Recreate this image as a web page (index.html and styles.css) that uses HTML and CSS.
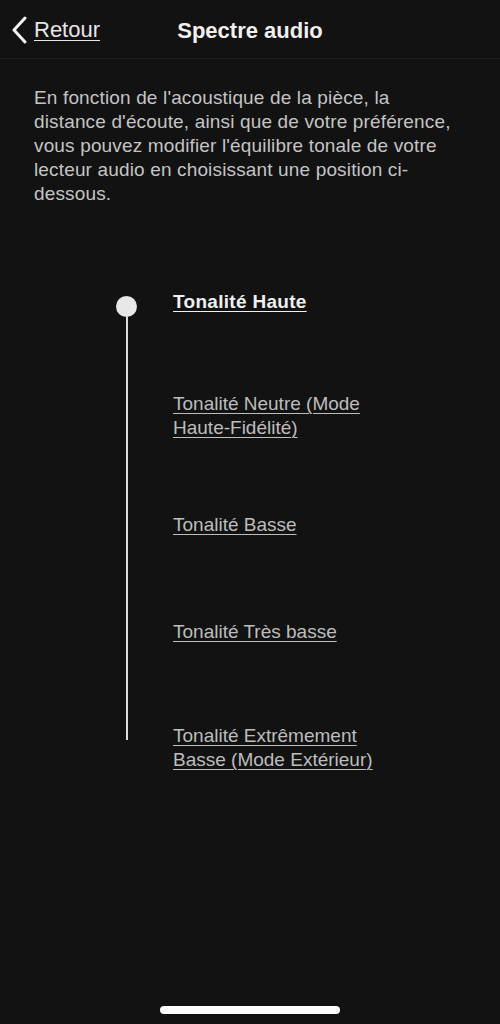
FILE: index.html
```html
<!DOCTYPE html>
<html lang="fr">
<head>
<meta charset="utf-8">
<title>Spectre audio</title>
<link rel="stylesheet" href="styles.css">
</head>
<body>
<div class="screen">
  <header class="nav">
    <a class="back" href="#">
      <svg class="chev" width="18" height="28" viewBox="0 0 18 28"><path d="M15 2 L4 14 L15 26" fill="none" stroke="#f2f2f2" stroke-width="3" stroke-linecap="round" stroke-linejoin="round"/></svg>
      <span class="back-label">Retour</span>
    </a>
    <h1 class="title">Spectre audio</h1>
  </header>
  <p class="intro">En fonction de l'acoustique de la pièce, la distance d'écoute, ainsi que de votre préférence, vous pouvez modifier l'équilibre tonale de votre lecteur audio en choisissant une position ci-dessous.</p>
  <div class="track">
    <div class="rail">
      <span class="dot"></span>
      <span class="line"></span>
    </div>
    <ul class="options">
      <li><a class="opt active" href="#">Tonalité Haute</a></li>
      <li><a class="opt" href="#">Tonalité Neutre (Mode<br>Haute-Fidélité)</a></li>
      <li class="opt-3"><a class="opt" href="#">Tonalité Basse</a></li>
      <li class="opt-4"><a class="opt" href="#">Tonalité Très basse</a></li>
      <li class="opt-5"><a class="opt" href="#">Tonalité Extrêmement<br>Basse (Mode Extérieur)</a></li>
    </ul>
  </div>
  <div class="home-indicator"></div>
</div>
</body>
</html>
```
FILE: styles.css
```css
html, body {
  margin: 0;
  padding: 0;
  background: #121212;
}
body {
  font-family: "Liberation Sans", Arial, sans-serif;
  color: #c8c8c8;
}
.screen {
  position: relative;
  width: 500px;
  height: 1024px;
  overflow: hidden;
  background: #121212;
}
.nav {
  position: relative;
  height: 55px;
  padding-top: 3px;
  border-bottom: 1px solid #1e1e1e;
  display: flex;
  align-items: center;
  justify-content: center;
}
.back {
  position: absolute;
  left: 10px;
  top: 16px;
  display: flex;
  align-items: center;
  gap: 6px;
  color: #e6e6e6;
  text-decoration: none;
}
.chev {
  display: block;
}
.back-label {
  font-size: 22px;
  text-decoration: underline;
  text-underline-offset: 3px;
  text-decoration-thickness: 1px;
}
.title {
  margin: 0;
  font-size: 22px;
  font-weight: bold;
  color: #f0f0f0;
}
.intro {
  margin: 27px 34px 0 34px;
  font-size: 19px;
  letter-spacing: 0.15px;
  line-height: 24px;
  color: #c4c4c4;
}
.track {
  display: flex;
  margin-top: 84px;
  padding-left: 116px;
}
.rail {
  width: 21px;
  display: flex;
  flex-direction: column;
  align-items: center;
  padding-top: 6px;
  padding-bottom: 32px;
}
.dot {
  width: 21px;
  height: 21px;
  border-radius: 50%;
  background: #e8e8e8;
  flex: none;
}
.line {
  width: 2px;
  flex: 1;
  background: #dcdcdc;
  margin-top: -1px;
}
.options {
  list-style: none;
  margin: 0 0 0 36px;
  padding: 0;
  display: flex;
  flex-direction: column;
  gap: 78px;
}
.opt-3 {
  margin-top: -5px;
}
.opt-4 {
  margin-top: 5px;
}
.opt-5 {
  margin-top: 2px;
}
.opt {
  display: block;
  font-size: 19px;
  line-height: 24px;
  color: #bdbdbd;
  text-decoration: underline;
  text-underline-offset: 3px;
  text-decoration-thickness: 1px;
}
.opt.active {
  font-weight: bold;
  letter-spacing: 0.3px;
  color: #f0f0f0;
}
.home-indicator {
  position: absolute;
  left: 160px;
  bottom: 10px;
  width: 180px;
  height: 8px;
  border-radius: 4px;
  background: #ffffff;
}
```
